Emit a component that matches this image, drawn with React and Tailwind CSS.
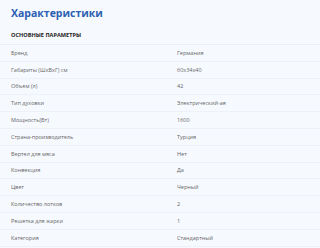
import React from 'react';

const specs = [
  ['Бренд', 'Германия'],
  ['Габариты (ШxВxГ) см', '60x34x40'],
  ['Объем (л)', '42'],
  ['Тип духовки', 'Электрический-ая'],
  ['Мощность(Вт)', '1600'],
  ['Страна-производитель', 'Турция'],
  ['Вертел для мяса', 'Нет'],
  ['Конвекция', 'Да'],
  ['Цвет', 'Черный'],
  ['Количество лотков', '2'],
  ['Решетка для жарки', '1'],
  ['Категория', 'Стандартный'],
];

export default function App() {
  return (
    <div className="w-[320px] h-[248px] overflow-hidden bg-[#f6f9fe] font-['Open_Sans',sans-serif]">
      <div className="px-[11px]">
        <h1 className="pt-[6px] text-[10.5px] leading-[14px] font-bold text-[#2b5fb3]">Характеристики</h1>
        <div className="mt-[11px] pb-[5px] text-[5.6px] leading-[8px] font-bold uppercase text-[#222]">Основные параметры</div>
      </div>
      <div className="border-t border-[#e9eef7]">
        {specs.map(([k, v]) => (
          <div key={k} className="flex items-center h-[16.8px] px-[11px] border-b border-[#edf1f8] text-[5.5px] text-[#666]">
            <span className="w-[166px] shrink-0">{k}</span>
            <span>{v}</span>
          </div>
        ))}
      </div>
    </div>
  );
}
